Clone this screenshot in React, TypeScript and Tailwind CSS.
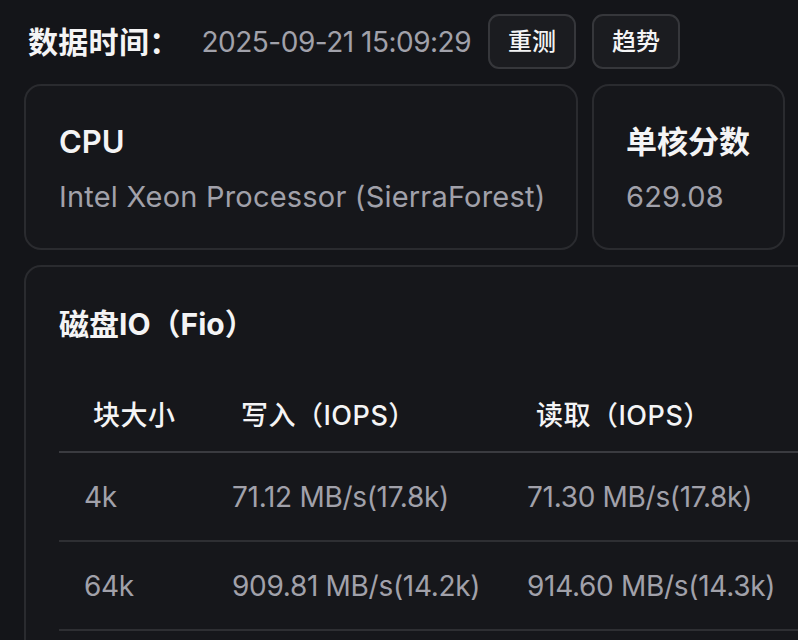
import React from "react";

const font = { fontFamily: 'Inter, "Noto Sans CJK SC", sans-serif' };

export default function App() {
  const rows = [
    ["4k", "71.12 MB/s(17.8k)", "71.30 MB/s(17.8k)"],
    ["64k", "909.81 MB/s(14.2k)", "914.60 MB/s(14.3k)"],
  ];
  return (
    <div
      className="w-[798px] h-[640px] overflow-hidden bg-[#141519] text-[#f4f4f5]"
      style={font}
    >
      <div className="flex items-center pl-[28px] pt-[14px] h-[69px]">
        <div className="text-[30px] font-bold leading-none tracking-[0.3px]">数据时间：</div>
        <div className="ml-[22px] text-[28px] leading-none text-[#a1a1aa] tracking-[-0.5px]">
          2025-09-21 15:09:29
        </div>
        <button className="ml-[17px] w-[88px] h-[55px] rounded-[11px] border-2 border-[#36373b] bg-[#1b1c20] text-[24px] font-medium text-[#f4f4f5]">
          重测
        </button>
        <button className="ml-[16px] w-[88px] h-[55px] rounded-[11px] border-2 border-[#36373b] bg-[#1b1c20] text-[24px] font-medium text-[#f4f4f5]">
          趋势
        </button>
      </div>

      <div className="flex gap-[14px] pl-[24px] mt-[15px]">
        <div className="w-[554px] h-[166px] rounded-[17px] border-2 border-[#2a2b2f] bg-[#16171b] pl-[33px] pt-[40px]">
          <div className="text-[31px] font-semibold leading-none">CPU</div>
          <div className="mt-[25px] text-[29px] leading-none text-[#a1a1aa] tracking-[0.2px]">
            Intel Xeon Processor (SierraForest)
          </div>
        </div>
        <div className="w-[193px] h-[166px] rounded-[17px] border-2 border-[#2a2b2f] bg-[#16171b] pl-[32px] pt-[40px]">
          <div className="text-[31px] font-bold leading-none">单核分数</div>
          <div className="mt-[25px] text-[29px] leading-none text-[#a1a1aa] tracking-[0.2px]">629.08</div>
        </div>
      </div>

      <div className="ml-[24px] mt-[15px] w-[820px] h-[420px] rounded-[17px] border-2 border-[#2a2b2f] bg-[#16171b] pl-[33px] pt-[42px]">
        <div className="text-[30px] font-bold leading-none">磁盘IO（Fio）</div>
        <div className="mt-[40px]">
          <div className="flex items-center h-[74px] border-b-2 border-[#3a3b40] text-[27px] font-medium leading-none tracking-[0.5px]">
            <div className="w-[148px] pl-[34px]">块大小</div>
            <div className="w-[295px] pl-[34px]">写入（IOPS）</div>
            <div className="flex-1 pl-[34px]">读取（IOPS）</div>
          </div>
          {rows.map((r) => (
            <div
              key={r[0]}
              className="flex items-center h-[89px] border-b-2 border-[#2e2f33] text-[28px] leading-none text-[#a1a1aa] tracking-[-0.3px]"
            >
              <div className="w-[148px] pl-[25px]">{r[0]}</div>
              <div className="w-[295px] pl-[25px]">{r[1]}</div>
              <div className="flex-1 pl-[25px]">{r[2]}</div>
            </div>
          ))}
        </div>
      </div>
    </div>
  );
}
